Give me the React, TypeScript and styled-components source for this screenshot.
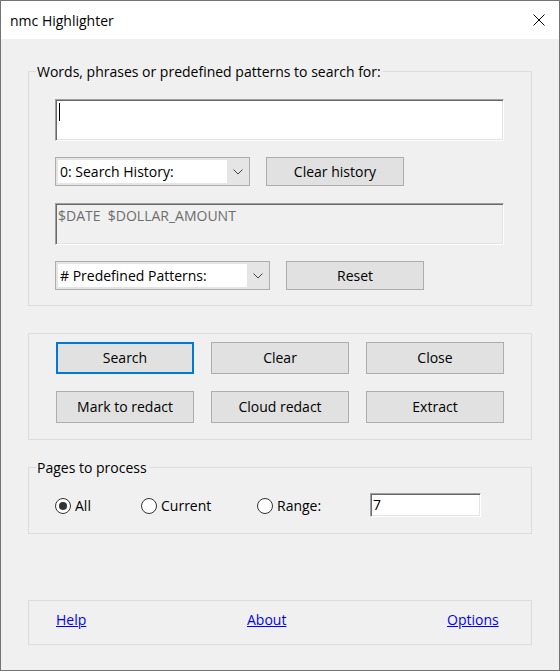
import styled, { createGlobalStyle } from "styled-components";

const GlobalStyle = createGlobalStyle`
  html, body {
    margin: 0;
    padding: 0;
    background: #f0f0f0;
  }
  * {
    box-sizing: border-box;
  }
`;

const Window = styled.div`
  width: 560px;
  height: 671px;
  border: 1px solid #737373;
  background: #f0f0f0;
  display: flex;
  flex-direction: column;
  font-family: "Open Sans", "Noto Sans", sans-serif;
  font-size: 14px;
  color: #000;
`;

const TitleBar = styled.div`
  height: 38px;
  background: #fff;
  display: flex;
  align-items: center;
  justify-content: space-between;
  padding-left: 9px;
  padding-right: 14px;
  flex-shrink: 0;
`;

const Title = styled.span`
  font-size: 14px;
  line-height: 20px;
  padding-top: 1px;
`;

const CloseIcon = styled.svg`
  width: 12px;
  height: 12px;
  display: block;
`;

const Client = styled.div`
  flex: 1;
  padding: 0 27px;
  display: flex;
  flex-direction: column;
`;

const Group = styled.section<{ $top: number }>`
  border: 1px solid #dcdcdc;
  margin-top: ${({ $top }) => $top}px;
`;

const GroupLabel = styled.span`
  display: block;
  width: fit-content;
  margin: -10px 0 0 7px;
  padding: 0 2px 0 1px;
  line-height: 20px;
  background: #f0f0f0;
`;

const GroupBody = styled.div<{ $pad: string }>`
  padding: ${({ $pad }) => $pad};
  display: flex;
  flex-direction: column;
`;

const Sunken = styled.div<{ $w: number; $h: number; $disabled?: boolean }>`
  width: ${({ $w }) => $w}px;
  height: ${({ $h }) => $h}px;
  border: 1px solid;
  border-color: #a0a0a0 #fff #fff #a0a0a0;
  box-shadow: inset 1px 1px 0 #696969, inset -1px -1px 0 #e3e3e3;
  background: ${({ $disabled }) => ($disabled ? "#f0f0f0" : "#fff")};
  color: ${({ $disabled }) => ($disabled ? "#6d6d6d" : "#000")};
  padding: ${({ $disabled }) => ($disabled ? "2px 2px" : "1px 2px")};
  line-height: 20px;
  white-space: pre;
`;

const Caret = styled.span`
  display: block;
  width: 1px;
  height: 18px;
  margin: 2px 0 0 1px;
  background: #000;
`;

const Row = styled.div<{ $top: number }>`
  display: flex;
  gap: 16px;
  margin-top: ${({ $top }) => $top}px;
`;

const Combo = styled.div<{ $w: number }>`
  width: ${({ $w }) => $w}px;
  height: 29px;
  border: 1px solid #adadad;
  background: #e5e5e5;
  padding: 2px 0 2px 2px;
  display: flex;
`;

const ComboText = styled.div`
  flex: 1;
  background: #fff;
  padding-left: 2px;
  line-height: 23px;
  white-space: nowrap;
`;

const ComboArrow = styled.div`
  width: 22px;
  display: flex;
  align-items: center;
  justify-content: center;
`;

const Button = styled.button<{ $focused?: boolean }>`
  width: 138px;
  height: 29px;
  background: #e1e1e1;
  border: ${({ $focused }) => ($focused ? "2px solid #0078d7" : "1px solid #adadad")};
  font-family: inherit;
  font-size: 14px;
  color: #000;
  padding: 0;
  margin: 0;
  line-height: 20px;
`;

const ButtonGrid = styled.div`
  display: grid;
  grid-template-columns: repeat(3, 138px);
  grid-auto-rows: 32px;
  column-gap: 17px;
  row-gap: 17px;

  & > button {
    height: 32px;
  }
`;

const RadioRow = styled.div`
  display: grid;
  grid-template-columns: 86px 116px 113px 111px;
  align-items: center;
  height: 24px;
`;

const RadioLabel = styled.label`
  display: flex;
  align-items: center;
  gap: 4px;
  line-height: 20px;
  padding-top: 2px;
`;

const RadioDot = styled.span<{ $checked?: boolean }>`
  width: 16px;
  height: 16px;
  border-radius: 50%;
  border: 1px solid #333;
  background: #fff;
  display: flex;
  align-items: center;
  justify-content: center;

  &::after {
    content: "";
    width: 8px;
    height: 8px;
    border-radius: 50%;
    background: ${({ $checked }) => ($checked ? "#333" : "transparent")};
  }
`;

const Links = styled.div`
  display: grid;
  grid-template-columns: 191px 200px auto;
  line-height: 20px;
`;

const Link = styled.a`
  color: #0000ff;
  text-decoration: underline;
  width: fit-content;
  cursor: pointer;
`;

const Chevron = () => (
  <svg width="10" height="6" viewBox="0 0 10 6">
    <path d="M0.5 0.5 L5 5 L9.5 0.5" fill="none" stroke="#444" strokeWidth="1" />
  </svg>
);

export default function App() {
  return (
    <>
      <GlobalStyle />
      <Window>
        <TitleBar>
          <Title>nmc Highlighter</Title>
          <CloseIcon viewBox="0 0 12 12">
            <path d="M0.5 0.5 L11.5 11.5 M11.5 0.5 L0.5 11.5" stroke="#000" strokeWidth="1" />
          </CloseIcon>
        </TitleBar>
        <Client>
          <Group $top={32}>
            <GroupLabel>Words, phrases or predefined patterns to search for:</GroupLabel>
            <GroupBody $pad="0 0 15px 26px">
              <Row $top={17}>
                <Sunken $w={449} $h={42}>
                  <Caret />
                </Sunken>
              </Row>
              <Row $top={16}>
                <Combo $w={195}>
                  <ComboText>0: Search History:</ComboText>
                  <ComboArrow>
                    <Chevron />
                  </ComboArrow>
                </Combo>
                <Button>Clear history</Button>
              </Row>
              <Row $top={17}>
                <Sunken $w={449} $h={42} $disabled>
                  {"$DATE  $DOLLAR_AMOUNT"}
                </Sunken>
              </Row>
              <Row $top={16}>
                <Combo $w={215}>
                  <ComboText># Predefined Patterns:</ComboText>
                  <ComboArrow>
                    <Chevron />
                  </ComboArrow>
                </Combo>
                <Button>Reset</Button>
              </Row>
            </GroupBody>
          </Group>

          <Group $top={27}>
            <GroupBody $pad="8px 0 16px 27px">
              <ButtonGrid>
                <Button $focused>Search</Button>
                <Button>Clear</Button>
                <Button>Close</Button>
                <Button>Mark to redact</Button>
                <Button>Cloud redact</Button>
                <Button>Extract</Button>
              </ButtonGrid>
            </GroupBody>
          </Group>

          <Group $top={27}>
            <GroupLabel>Pages to process</GroupLabel>
            <GroupBody $pad="15px 0 16px 26px">
              <RadioRow>
                <RadioLabel>
                  <RadioDot $checked />
                  All
                </RadioLabel>
                <RadioLabel>
                  <RadioDot />
                  Current
                </RadioLabel>
                <RadioLabel>
                  <RadioDot />
                  Range:
                </RadioLabel>
                <Sunken $w={111} $h={24}>7</Sunken>
              </RadioRow>
            </GroupBody>
          </Group>

          <Group $top={66}>
            <GroupBody $pad="9px 0 14px 27px">
              <Links>
                <Link>Help</Link>
                <Link>About</Link>
                <Link>Options</Link>
              </Links>
            </GroupBody>
          </Group>
        </Client>
      </Window>
    </>
  );
}
